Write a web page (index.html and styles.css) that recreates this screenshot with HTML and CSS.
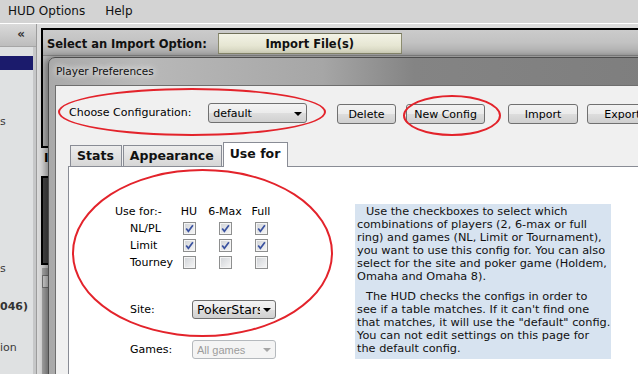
FILE: index.html
```html
<!DOCTYPE html>
<html lang="en">
<head>
    <meta charset="UTF-8">
    <meta name="viewport" content="width=device-width, initial-scale=1.0">
    <title>HUD Options - Player Preferences</title>
    <link rel="stylesheet" href="styles.css">
</head>
<body>
    <!-- 메뉴 -->
    <div class="menubar">
        <span class="menu-item">HUD Options</span>
        <span class="menu-item">Help</span>
    </div>

    <!-- 뒤쪽 메인 창 -->
    <div class="app">
        <div class="sidebar">
            <div class="side-head">&laquo;</div>
            <div class="side-sel"></div>
            <div class="side-text t1">s</div>
            <div class="side-text t2">s</div>
            <div class="side-text t3">046)</div>
            <div class="side-text t4">ion</div>
        </div>
        <div class="main">
            <div class="import-box">
                <div class="import-bar">
                    <span class="import-label">Select an Import Option:</span>
                    <button class="import-btn">Import File(s)</button>
                </div>
            </div>
            <div class="section-title">Import History</div>
            <div class="history-box"></div>
            <div class="scroll-track"><div class="scroll-thumb"></div></div>
        </div>
    </div>

    <!-- Player Preferences 대화상자 -->
    <div class="dialog">
        <div class="dialog-title">Player Preferences</div>
        <div class="dialog-client">
            <div class="config-row">
                <span class="config-label">Choose Configuration:</span>
                <div class="combo combo-config">
                    <span class="combo-text">default</span>
                    <span class="combo-arrow"></span>
                </div>
                <button class="btn btn-delete">Delete</button>
                <button class="btn btn-new">New Config</button>
                <button class="btn btn-import">Import</button>
                <button class="btn btn-export">Export</button>
            </div>

            <div class="tabs">
                <div class="tab">Stats</div>
                <div class="tab">Appearance</div>
                <div class="tab active">Use for</div>
            </div>

            <div class="tab-panel">
                <div class="usefor-col">
                    <div class="usefor-grid">
                        <span class="grid-head">Use for:-</span>
                        <span class="col-head">HU</span>
                        <span class="col-head">6-Max</span>
                        <span class="col-head">Full</span>

                        <span class="row-label">NL/PL</span>
                        <span class="cb"><svg viewBox="0 0 11 11"><path d="M2.2 5.4l2.2 2.9L8.9 2.2"/></svg></span>
                        <span class="cb"><svg viewBox="0 0 11 11"><path d="M2.2 5.4l2.2 2.9L8.9 2.2"/></svg></span>
                        <span class="cb"><svg viewBox="0 0 11 11"><path d="M2.2 5.4l2.2 2.9L8.9 2.2"/></svg></span>

                        <span class="row-label">Limit</span>
                        <span class="cb"><svg viewBox="0 0 11 11"><path d="M2.2 5.4l2.2 2.9L8.9 2.2"/></svg></span>
                        <span class="cb"><svg viewBox="0 0 11 11"><path d="M2.2 5.4l2.2 2.9L8.9 2.2"/></svg></span>
                        <span class="cb"><svg viewBox="0 0 11 11"><path d="M2.2 5.4l2.2 2.9L8.9 2.2"/></svg></span>

                        <span class="row-label">Tourney</span>
                        <span class="cb"></span>
                        <span class="cb"></span>
                        <span class="cb"></span>
                    </div>

                    <div class="field-row site-row">
                        <span class="field-label">Site:</span>
                        <div class="combo combo-site">
                            <span class="combo-text">PokerStars</span>
                            <span class="combo-arrow"></span>
                        </div>
                    </div>
                    <div class="field-row games-row">
                        <span class="field-label">Games:</span>
                        <div class="combo combo-games">
                            <span class="combo-text">All games</span>
                            <span class="combo-arrow"></span>
                        </div>
                    </div>
                </div>

                <div class="info-box">
                    <p class="first">Use the checkboxes to select which<br>combinations of players (2, 6-max or full<br>ring) and games (NL, Limit or Tournament),<br>you want to use this config for. You can also<br>select for the site and poker game (Holdem,<br>Omaha and Omaha 8).</p>
                    <p class="first">The HUD checks the configs in order to<br>see if a table matches. If it can't find one<br>that matches, it will use the "default" config.<br>You can not edit settings on this page for<br>the default config.</p>
                </div>
            </div>
        </div>
    </div>

    <!-- 빨간 표시 -->
    <div class="mark mark-config"></div>
    <div class="mark mark-new"></div>
    <div class="mark mark-usefor"></div>
</body>
</html>
```

FILE: styles.css
```css
* {
    box-sizing: border-box;
}

body {
    margin: 0;
    width: 638px;
    height: 374px;
    overflow: hidden;
    position: relative;
    font-family: "DejaVu Sans", Verdana, sans-serif;
    font-size: 11px;
    color: #000;
    background-color: #d3d3d3;
}

button {
    font-family: inherit;
    cursor: pointer;
}

/* 메뉴 */
.menubar {
    height: 24px;
    display: flex;
    align-items: center;
    gap: 20px;
    padding: 0 0 1px 8px;
    background-color: #d3d3d3;
    border-bottom: 1px solid #fff;
    font-size: 12px;
    color: #111;
}

/* 뒤쪽 창 */
.app {
    display: flex;
    height: 350px;
}

.sidebar {
    width: 37px;
    background-color: #dfe1e2;
    border-right: 1px solid #9c9c9c;
    box-shadow: inset -3px 0 0 #c6c7c8;
    overflow: hidden;
    white-space: nowrap;
}

.side-head {
    height: 23px;
    padding-right: 11px;
    text-align: right;
    line-height: 21px;
    font-weight: bold;
    font-size: 12px;
    color: #333;
    background: linear-gradient(#dadada, #bdbdbd);
    border-bottom: 1px solid #a6a6a6;
}

.side-sel {
    height: 14px;
    margin: 9px 3px 0 0;
    background-color: #1b1b6c;
}

.side-text {
    height: 14px;
    line-height: 14px;
    color: #3a3a3a;
}

.t1 { margin-top: 45px; }
.t2 { margin-top: 133px; }
.t3 { margin-top: 24px; font-weight: bold; color: #333; }
.t4 { margin-top: 27px; }

.main {
    flex: 1;
    padding: 4px 0 0 4px;
    background-color: #dcdcdc;
}

.import-box {
    height: 120px;
    border: 2px solid #000;
    border-right: none;
    background-color: #b8b8b8;
}

.import-bar {
    height: 26px;
    display: flex;
    align-items: center;
    padding: 2px 0 0 4px;
    background: linear-gradient(#cbcbcb, #c2c2c2 50%, #a9a9a9);
    border-bottom: 1px solid #8a8a8a;
}

.import-label {
    font-weight: bold;
    font-size: 11.5px;
    color: #111;
}

.import-btn {
    width: 184px;
    height: 21px;
    margin-left: 11px;
    padding: 0;
    font-weight: bold;
    font-size: 11.5px;
    color: #111;
    background: linear-gradient(#f3f3e6, #e6e6d3 60%, #d2d2bc);
    border: 1px solid #8c8c70;
    border-top-color: #6f6f58;
}

/* 대화상자 뒤에 가려져 첫 글자만 보임 */
.section-title {
    width: 8px;
    height: 28px;
    padding-left: 3px;
    overflow: hidden;
    white-space: nowrap;
    line-height: 20px;
    font-weight: bold;
    font-size: 12px;
}

.history-box {
    height: 89px;
    border: 2px solid #000;
    border-right: none;
    background: linear-gradient(to right, #474747, #9c9c9c);
}

.scroll-track {
    width: 8px;
    height: 110px;
    margin: 3px 0 0 1px;
    padding-top: 7px;
    background-color: #a9a9a9;
}

.scroll-thumb {
    height: 13px;
    border: 1px solid #777;
    background-color: #d6d6d6;
}

/* 대화상자 */
.dialog {
    position: absolute;
    left: 48px;
    top: 57px;
    width: 610px;
    height: 330px;
    display: flex;
    flex-direction: column;
    border: 1px solid #4d4d4d;
    border-radius: 7px 7px 0 0;
    background: linear-gradient(to right, #a9a9a9 0, #b9b9b9 15%, #a6a6a6 45%, #848484 60%, #7e7e7e 100%);
    box-shadow: -3px 0 7px rgba(0, 0, 0, 0.4);
}

.dialog-title {
    height: 27px;
    padding-left: 7px;
    line-height: 27px;
    font-size: 10.5px;
    color: #111;
    text-shadow: 0 0 6px #fff, 0 0 10px rgba(255, 255, 255, 0.8);
}

.dialog-client {
    flex: 1;
    display: flex;
    flex-direction: column;
    margin-left: 6px;
    background-color: #f0f0f0;
    border-top: 1px solid #6e6e6e;
    border-left: 1px solid #6e6e6e;
}

.config-row {
    display: flex;
    align-items: flex-start;
    padding: 17px 0 0 13px;
    white-space: nowrap;
}

.config-label {
    width: 140px;
    line-height: 20px;
}

.combo {
    display: flex;
    align-items: center;
    padding-left: 4px;
    border: 1px solid #707070;
    border-radius: 3px;
    background: linear-gradient(#f3f3f3, #ebebeb 50%, #dedede 51%, #d0d0d0);
}

.combo-text {
    flex: 1;
    overflow: hidden;
    white-space: nowrap;
}

.combo-arrow {
    flex: none;
    width: 0;
    height: 0;
    margin: 1px 4px 0 3px;
    border-left: 4px solid transparent;
    border-right: 4px solid transparent;
    border-top: 4px solid #000;
}

.combo-config {
    width: 99px;
    height: 20px;
}

.btn {
    height: 20px;
    margin-top: 1px;
    padding: 0;
    font-size: 11px;
    color: #000;
    border: 1px solid #707070;
    border-radius: 3px;
    background: linear-gradient(#f2f2f2, #ebebeb 50%, #dddddd 51%, #cfcfcf);
}

.btn-delete { width: 60px; margin-left: 30px; }
.btn-new { width: 79px; margin-left: 10px; }
.btn-import { width: 71px; margin-left: 23px; }
.btn-export { width: 70px; margin-left: 9px; }

/* 탭 */
.tabs {
    height: 23px;
    display: flex;
    align-items: flex-end;
    margin: 19px 0 0 12px;
    padding-left: 2px;
}

.tab {
    height: 21px;
    padding: 0 7px 0 6px;
    line-height: 20px;
    font-weight: bold;
    font-size: 12.5px;
    color: #111;
    background: linear-gradient(#ededed, #d6d6d6);
    border: 1px solid #898c95;
    border-bottom: none;
    margin-right: 1px;
}

.tab.active {
    height: 25px;
    margin-bottom: -1px;
    padding-top: 2px;
    line-height: 17px;
    background: #fff;
    position: relative;
    z-index: 1;
}

.tab-panel {
    flex: 1;
    display: flex;
    margin-left: 12px;
    padding: 36px 0 0 46px;
    background-color: #fff;
    border-top: 1px solid #898c95;
    border-left: 1px solid #898c95;
}

.usefor-col {
    width: 240px;
}

.usefor-grid {
    display: grid;
    grid-template-columns: 56px 36px 36px 36px;
    grid-auto-rows: 17px;
    align-items: center;
    justify-items: center;
    white-space: nowrap;
}

.grid-head {
    justify-self: start;
}

.row-label {
    justify-self: start;
    padding-left: 15px;
}

.cb {
    width: 13px;
    height: 13px;
    display: flex;
    align-items: center;
    justify-content: center;
    border: 1px solid #8e8f8f;
    background: linear-gradient(135deg, #cfd2d6, #f7f7f7);
    box-shadow: inset 0 0 0 1px #f4f4f4;
}

.cb svg {
    width: 11px;
    height: 11px;
    fill: none;
    stroke: #3a52a0;
    stroke-width: 1.7;
}

.field-row {
    display: flex;
    align-items: center;
    padding-left: 15px;
}

.field-label {
    width: 62px;
}

.site-row {
    margin-top: 29px;
}

.games-row {
    margin-top: 21px;
}

.combo-site {
    width: 84px;
    height: 19px;
    font-size: 12.5px;
}

.combo-games {
    width: 84px;
    height: 19px;
    font-family: "Liberation Sans", Arial, sans-serif;
    font-size: 11px;
    color: #9c9c9c;
    border-color: #b5b9bd;
    background: #f4f4f4;
}

.combo-games .combo-arrow {
    border-top-color: #a6a6a6;
}

/* 설명 */
.info-box {
    width: 256px;
    height: 155px;
    margin-top: 1px;
    padding: 1px 2px 0 2px;
    background-color: #d7e3f0;
    font-size: 11.3px;
    line-height: 13px;
    color: #111;
    white-space: nowrap;
}

.info-box p {
    margin: 0 0 7px 0;
}

.info-box .first {
    text-indent: 9px;
}

/* 빨간 표시 */
.mark {
    position: absolute;
    border: 2px solid #e3232b;
    border-radius: 50%;
}

.mark-config {
    left: 58px;
    top: 88px;
    width: 268px;
    height: 48px;
}

.mark-new {
    left: 403px;
    top: 95px;
    width: 98px;
    height: 41px;
}

.mark-usefor {
    left: 72px;
    top: 169px;
    width: 261px;
    height: 168px;
}
```
